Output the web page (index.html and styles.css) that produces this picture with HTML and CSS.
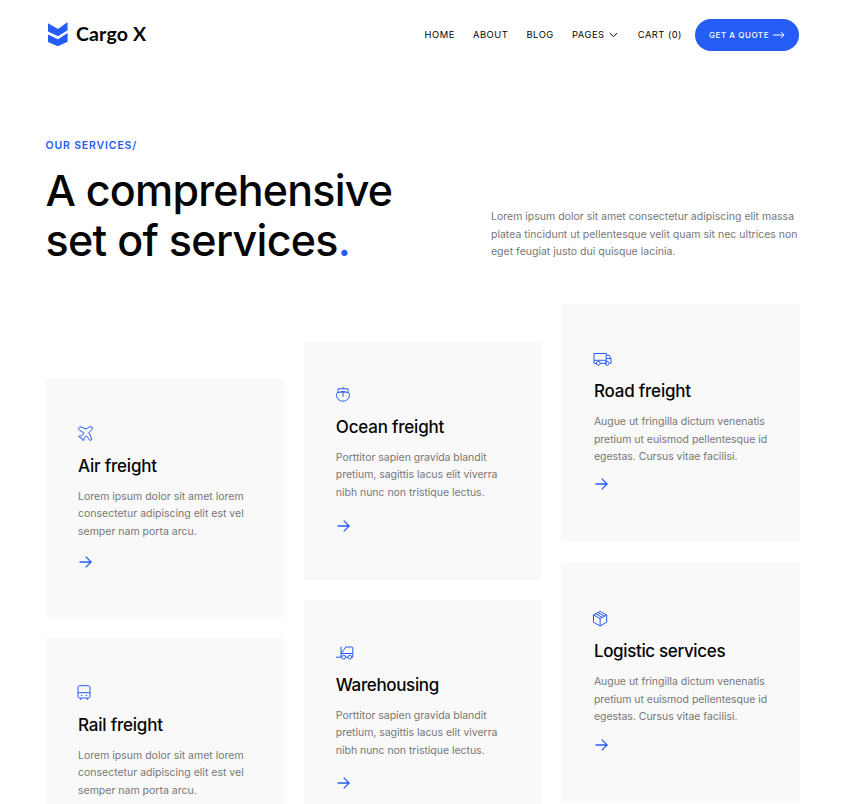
FILE: index.html
```html
<!DOCTYPE html>
<html lang="en">
<head>
<meta charset="utf-8">
<title>Cargo X</title>
<link rel="stylesheet" href="styles.css">
</head>
<body>
<header class="header">
  <a class="logo">
    <svg class="logo-mark" width="20" height="25" viewBox="0 0 20 25"><path d="M0 1.2 10 7 19.6 0v8.2L10 14.3 0 9.4zM0 12.4l10 4.8 9.6-6.1v8.7L9.8 24.3 0 19.9z"/></svg>
    <span class="logo-name">Cargo X</span>
  </a>
  <nav class="nav">
    <a class="home">HOME</a><a class="about">ABOUT</a><a class="blog">BLOG</a>
    <a class="pages">PAGES <svg width="9" height="6" viewBox="0 0 9 6"><path d="M.8 1 4.5 4.7 8.2 1"/></svg></a>
    <a class="cart">CART (0)</a>
  </nav>
  <a class="quote"><span>GET A QUOTE</span><svg width="12" height="8" viewBox="0 0 12 8"><path d="M0 4h11.1M8 .9l3.1 3.1L8 7.1"/></svg></a>
</header>
<main>
  <section class="intro">
    <div>
      <p class="eyebrow">OUR SERVICES/</p>
      <h1><span class="line one">A comprehensive</span><span class="line two">set of services<i>.</i></span></h1>
    </div>
    <p class="lead"><span>Lorem ipsum dolor sit amet consectetur adipiscing elit massa</span><span>platea tincidunt ut pellentesque velit quam sit nec ultrices non</span><span>eget feugiat justo dui quisque lacinia.</span></p>
  </section>
  <section class="services">
    <div class="column first">
      <article class="card air">
        <svg class="icon" viewBox="0 0 18 18"><path d="M.7 2.8Q1.6 1.2 3.2 2L8 4 11.2 2Q15.4.8 13.9 4.6L10.9 7.7 13.6 13.6Q13.8 15.4 12 15.5L8.4 10.8 6.4 12.5 5.6 15.4Q4.3 16 4 13.3.8 12.7.7 11.2L3.8 10.6 6.2 8.4.8 4.6Q0 3.7.7 2.8z"/></svg>
        <h2>Air freight</h2>
        <p><span>Lorem ipsum dolor sit amet lorem</span><span>consectetur adipiscing elit est vel</span><span>semper nam porta arcu.</span></p>
        <svg class="arrow" viewBox="0 0 13 12"><path d="M.5 6h11.6M6.7.6 12.1 6l-5.4 5.4"/></svg>
      </article>
      <article class="card rail">
        <svg class="icon" viewBox="0 0 18 18"><rect x="0" y="1.7" width="12" height="12.3" rx="1.6"/><path d="M0 8.7h12M3.2 14l-1 2M8.8 14l1 2M2.9 11.4h1.4M7.7 11.4h1.4"/></svg>
        <h2>Rail freight</h2>
        <p><span>Lorem ipsum dolor sit amet lorem</span><span>consectetur adipiscing elit est vel</span><span>semper nam porta arcu.</span></p>
        <svg class="arrow" viewBox="0 0 13 12"><path d="M.5 6h11.6M6.7.6 12.1 6l-5.4 5.4"/></svg>
      </article>
    </div>
    <div class="column second">
      <article class="card ocean">
        <svg class="icon" viewBox="0 0 18 18"><path d="M7 .8v2M2 7V2.8h10V7M7 5.4v5.4M4.5 6h5M.6 8.3Q-.1 7.3 1.6 6.7 7 4.3 12.4 6.7 14.1 7.3 13.4 8.3C13.9 12 11 15.2 7 15.2 3 15.2.1 12 .6 8.3z"/></svg>
        <h2>Ocean freight</h2>
        <p><span>Porttitor sapien gravida blandit</span><span>pretium, sagittis lacus elit viverra</span><span>nibh nunc non tristique lectus.</span></p>
        <svg class="arrow" viewBox="0 0 13 12"><path d="M.5 6h11.6M6.7.6 12.1 6l-5.4 5.4"/></svg>
      </article>
      <article class="card warehouse">
        <svg class="icon" viewBox="0 0 18 18"><path d="M5 2.5v11.2M0 13.2h5M5 9.5h11.8M5.4 9.2l4.4-6.2h6.1q.9 0 .9.9v9.3h-1.2M9.5 13.2h2.4"/><circle cx="7.7" cy="13.2" r="1.9"/><circle cx="13.8" cy="13.2" r="1.9"/></svg>
        <h2>Warehousing</h2>
        <p><span>Porttitor sapien gravida blandit</span><span>pretium, sagittis lacus elit viverra</span><span>nibh nunc non tristique lectus.</span></p>
        <svg class="arrow" viewBox="0 0 13 12"><path d="M.5 6h11.6M6.7.6 12.1 6l-5.4 5.4"/></svg>
      </article>
    </div>
    <div class="column third">
      <article class="card road">
        <svg class="icon" viewBox="0 0 18 18"><path d="M2.8 13.3H0V3.5h12.2v9.8H6.1M0 10.3h12.2M12.2 5.2h2.9l1.9 3.3v4.8h-1.2M12.2 8.5H17"/><circle cx="4.3" cy="13.3" r="1.9"/><circle cx="13.2" cy="13.3" r="1.9"/></svg>
        <h2>Road freight</h2>
        <p><span>Augue ut fringilla dictum venenatis</span><span>pretium ut euismod pellentesque id</span><span>egestas. Cursus vitae facilisi.</span></p>
        <svg class="arrow" viewBox="0 0 13 12"><path d="M.5 6h11.6M6.7.6 12.1 6l-5.4 5.4"/></svg>
      </article>
      <article class="card logistic">
        <svg class="icon" viewBox="0 0 18 18"><path d="M-.5 5 6.1 1.4 12.7 5v7.2L6.1 16-.5 12.2zM-.5 5 6.1 8.6 12.7 5M6.1 8.6V16M1.7 3.8l6.6 3.6M3.9 2.6l6.6 3.6"/></svg>
        <h2>Logistic services</h2>
        <p><span>Augue ut fringilla dictum venenatis</span><span>pretium ut euismod pellentesque id</span><span>egestas. Cursus vitae facilisi.</span></p>
        <svg class="arrow" viewBox="0 0 13 12"><path d="M.5 6h11.6M6.7.6 12.1 6l-5.4 5.4"/></svg>
      </article>
    </div>
  </section>
</main>
</body>
</html>
```
FILE: styles.css
```css
* { box-sizing: border-box; }
html, body { height: 100%; }
body {
  margin: 0;
  overflow: hidden;
  background: #fff;
  color: #050505;
  font-family: Inter, sans-serif;
}
h1, h2, p { margin: 0; }
svg { fill: none; stroke: currentColor; flex: none; display: block; overflow: visible; }

.header { display: flex; align-items: center; height: 69px; padding: 0 45px 0 48px; }
.logo { display: flex; align-items: center; gap: 8px; }
.logo-mark { fill: #245cf5; stroke: none; }
.logo-name { font: 700 19.5px/24px Lato, sans-serif; letter-spacing: .15px; padding-bottom: 2px; }
.nav { display: flex; margin-left: auto; gap: 18.2px; font-size: 9.4px; line-height: 14px; letter-spacing: .5px; white-space: nowrap; }
.pages { display: flex; align-items: center; gap: 4px; margin-right: 2px; }
.cart { letter-spacing: .45px; }
.quote {
  display: flex; align-items: center; justify-content: center; gap: 4px;
  width: 104px; height: 32px; margin-left: 13px; border-radius: 16px;
  background: #245cf5; color: #fff; font-size: 8px; font-weight: 500; letter-spacing: .55px; white-space: nowrap;
}

.intro { display: flex; justify-content: space-between; align-items: flex-end; height: 197px; padding: 0 0 1px 45.5px; }
.eyebrow { color: #245cf5; font-size: 10.5px; line-height: 14px; font-weight: 600; letter-spacing: .85px; margin-bottom: 12px; }
h1 { font-size: 43px; line-height: 50px; font-weight: 500; letter-spacing: -.8px; white-space: nowrap; }
h1 .two { letter-spacing: -.7px; }
h1 i { color: #245cf5; font-style: normal; }
.line, p span { display: block; }
.lead { width: 353px; margin-bottom: 4px; color: #777; font-size: 10.5px; line-height: 17.6px; white-space: nowrap; }

.services { display: grid; grid-template-columns: 238.5px 238.4px 238.6px; gap: 19.5px; padding-left: 45.5px; align-items: start; }
.column { display: grid; gap: 20.5px; }
.first { margin-top: 112.5px; }
.second { margin-top: 75.5px; gap: 20px; }
.third { margin-top: 38px; }
.card { height: 238.5px; padding: 46px 0 0 32.5px; background: #f9f9f9; }
.icon { width: 18px; height: 18px; margin-bottom: 11px; color: #245cf5; stroke-width: 1; }
.card h2 { font-size: 17px; line-height: 24px; font-weight: 500; letter-spacing: -.2px; margin-bottom: 10px; }
.card p { color: #777; font-size: 10.5px; line-height: 17.6px; letter-spacing: -.03px; white-space: nowrap; }
.first .card p { letter-spacing: 0; }
.arrow { width: 13px; height: 12px; margin: 16.2px 0 0 .8px; color: #245cf5; stroke-width: 1.3; }
.second .card { height: 238px; padding: 44.4px 0 0 32.3px; }
.second .warehouse { padding-top: 44.2px; }
.second .warehouse h2 { letter-spacing: -.35px; }
.second .arrow { margin-top: 18px; }
.third .card { height: 238px; padding-top: 46px; }
.third .logistic { padding-top: 47.7px; }
.third .logistic h2 { letter-spacing: -.35px; }
.third .arrow { margin-top: 12.6px; }
```
